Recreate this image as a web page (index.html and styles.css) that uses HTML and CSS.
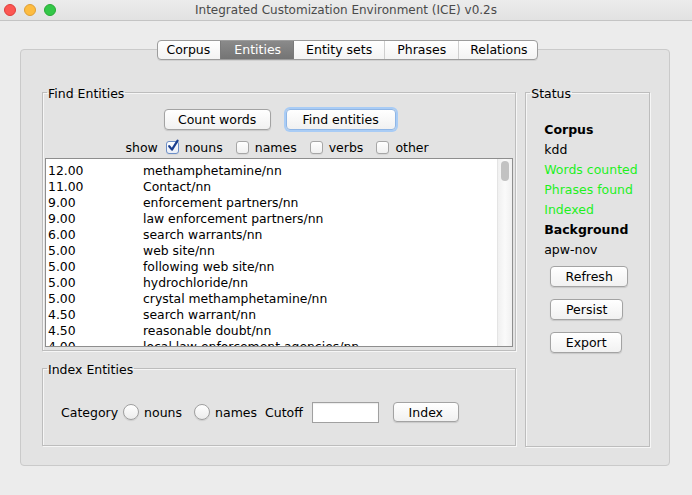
FILE: index.html
```html
<!DOCTYPE html>
<html>
<head>
<meta charset="utf-8">
<link rel="stylesheet" href="styles.css">
</head>
<body>
<div class="window">
  <div class="titlebar">
    <div class="lights">
      <span class="light red"></span>
      <span class="light yellow"></span>
      <span class="light green"></span>
    </div>
    <div class="title">Integrated Customization Environment (ICE) v0.2s</div>
    <div class="spacer"></div>
  </div>

  <div class="content">
    <div class="tabs">
      <span class="tab">Corpus</span>
      <span class="tab active">Entities</span>
      <span class="tab">Entity sets</span>
      <span class="tab">Phrases</span>
      <span class="tab">Relations</span>
    </div>

    <div class="panel">
      <div class="left">
        <fieldset class="group find">
          <legend>Find Entities</legend>
          <div class="gbody find-body">
            <div class="btnrow">
              <button class="btn btn-count">Count words</button>
              <button class="btn btn-find focus">Find entities</button>
            </div>
            <div class="showrow">
              <span class="lbl show">show</span>
              <span class="check checked"><svg viewBox="0 0 14 14" width="14" height="14"><path d="M3.2 7.2 L6 10.6 L11.6 1.6" fill="none" stroke="#1b3f8f" stroke-width="2.2" stroke-linecap="round" stroke-linejoin="round"/></svg></span>
              <span class="lbl">nouns</span>
              <span class="check"></span>
              <span class="lbl">names</span>
              <span class="check"></span>
              <span class="lbl">verbs</span>
              <span class="check"></span>
              <span class="lbl">other</span>
            </div>
            <div class="list">
              <div class="rows">
                <div class="row"><span class="num">12.00</span><span>methamphetamine/nn</span></div>
                <div class="row"><span class="num">11.00</span><span>Contact/nn</span></div>
                <div class="row"><span class="num">9.00</span><span>enforcement partners/nn</span></div>
                <div class="row"><span class="num">9.00</span><span>law enforcement partners/nn</span></div>
                <div class="row"><span class="num">6.00</span><span>search warrants/nn</span></div>
                <div class="row"><span class="num">5.00</span><span>web site/nn</span></div>
                <div class="row"><span class="num">5.00</span><span>following web site/nn</span></div>
                <div class="row"><span class="num">5.00</span><span>hydrochloride/nn</span></div>
                <div class="row"><span class="num">5.00</span><span>crystal methamphetamine/nn</span></div>
                <div class="row"><span class="num">4.50</span><span>search warrant/nn</span></div>
                <div class="row"><span class="num">4.50</span><span>reasonable doubt/nn</span></div>
                <div class="row"><span class="num">4.00</span><span>local law enforcement agencies/nn</span></div>
              </div>
              <div class="scrollbar"><div class="thumb"></div></div>
            </div>
          </div>
        </fieldset>

        <fieldset class="group index">
          <legend>Index Entities</legend>
          <div class="gbody index-body">
            <span class="lbl cat">Category</span>
            <span class="radio"></span>
            <span class="lbl r1">nouns</span>
            <span class="radio"></span>
            <span class="lbl r2">names</span>
            <span class="lbl cutoff">Cutoff</span>
            <span class="input"></span>
            <button class="btn btn-index">Index</button>
          </div>
        </fieldset>
      </div>

      <fieldset class="group status">
        <legend>Status</legend>
        <div class="gbody status-body">
          <div class="stat bold">Corpus</div>
          <div class="stat">kdd</div>
          <div class="stat ok">Words counted</div>
          <div class="stat ok">Phrases found</div>
          <div class="stat ok">Indexed</div>
          <div class="stat bold">Background</div>
          <div class="stat">apw-nov</div>
          <div class="sbtns">
            <button class="btn btn-refresh">Refresh</button>
            <button class="btn btn-persist">Persist</button>
            <button class="btn btn-export">Export</button>
          </div>
        </div>
      </fieldset>
    </div>
  </div>
</div>
</body>
</html>
```

FILE: styles.css
```css
* { box-sizing: border-box; }

html, body {
  margin: 0;
  padding: 0;
}

body {
  background: #ececec;
  font-family: "DejaVu Sans", sans-serif;
  font-size: 12.5px;
  color: #000;
  width: 692px;
  height: 495px;
  overflow: hidden;
}

.window {
  width: 692px;
  height: 495px;
  display: flex;
  flex-direction: column;
}

/* ---------- title bar ---------- */
.titlebar {
  height: 21px;
  display: flex;
  align-items: center;
  background: linear-gradient(#ececec, #e2e2e2);
  border-bottom: 1px solid #c4c4c4;
  flex: none;
}

.lights {
  display: flex;
  gap: 8px;
  padding-left: 4px;
  width: 60px;
}

.light {
  width: 12px;
  height: 12px;
  border-radius: 50%;
  display: block;
}
.light.red { background: #fc5753; border: 1px solid #df3d3a; }
.light.yellow { background: #fdbc40; border: 1px solid #de9f34; }
.light.green { background: #33c748; border: 1px solid #27aa35; }

.title {
  flex: 1;
  text-align: center;
  color: #4a4a4a;
  font-size: 12px;
  line-height: 20px;
}

.spacer { width: 60px; }

/* ---------- content ---------- */
.content {
  flex: 1;
  display: flex;
  flex-direction: column;
  padding: 19px 22px 28px 20px;
}

.tabs {
  align-self: center;
  margin-left: 5px;
  display: flex;
  height: 20px;
  border: 1px solid #9c9c9c;
  border-radius: 4px;
  background: linear-gradient(#ffffff, #f3f3f3);
  position: relative;
  z-index: 2;
  box-shadow: 0 1px 0 rgba(0,0,0,0.08);
  overflow: hidden;
}

.tab {
  line-height: 18px;
  padding: 0 12px;
  border-left: 1px solid #cfcfcf;
  color: #000;
}
.tab:first-child { border-left: none; padding: 0 10px 0 8px; }
.tab.active {
  background: linear-gradient(#8a8a8a, #747474);
  color: #fff;
  border-left-color: #7a7a7a;
  padding: 0 12px 0 13px;
}
.tab.active + .tab { border-left-color: #7a7a7a; }
.tab:last-child { padding: 0 9px 0 11px; }

.panel {
  height: 417px;
  flex: none;
  margin-top: -11px;
  border: 1px solid #cacaca;
  border-radius: 4px;
  background: #e3e3e3;
  display: flex;
  align-items: flex-start;
  gap: 9px;
  padding: 33px 19px 18px 21px;
}

.left {
  width: 475px;
  display: flex;
  flex-direction: column;
  gap: 8px;
}

/* ---------- group boxes ---------- */
.group {
  margin: 0;
  border: 1px solid #bdbdbd;
  box-shadow: 1px 1px 0 #f6f6f6, inset 1px 1px 0 #f6f6f6;
  padding: 0;
  min-width: 0;
}

.group legend {
  padding: 3px 1px 0 1px;
  margin-left: 4px;
  line-height: 16px;
  font-size: 12.5px;
}

.find { height: 268px; }

.find-body {
  display: flex;
  flex-direction: column;
  padding: 0 2px 2px 2px;
}

.btnrow {
  display: flex;
  justify-content: center;
  gap: 15px;
  margin-top: 7px;
  padding-left: 1px;
}

.btn {
  font-family: "DejaVu Sans", sans-serif;
  font-size: 12.5px;
  height: 21px;
  padding: 0;
  border: 1px solid #a3a3a3;
  border-radius: 4px;
  background: linear-gradient(#ffffff, #f1f1f1);
  box-shadow: 0 1px 1px rgba(0,0,0,0.12);
  color: #000;
}
.btn.focus {
  border-color: #8fb6e6;
  box-shadow: 0 0 0 2px #a9ccf5;
}
.btn-count { width: 107px; }
.btn-find { width: 110px; }

.showrow {
  display: flex;
  align-items: center;
  justify-content: center;
  margin-top: 8px;
  height: 18px;
  padding-right: 4px;
}
.showrow .lbl { margin-right: 13px; }
.showrow .lbl:last-child { margin-right: 0; }
.showrow .show { margin-right: 8px; }

.check {
  width: 13px;
  height: 13px;
  border: 1px solid #a6a6a6;
  border-radius: 3px;
  background: linear-gradient(#ffffff, #f0f0f0);
  margin-right: 6px;
  display: flex;
  align-items: center;
  justify-content: center;
  box-shadow: 0 1px 0 rgba(0,0,0,0.05);
}
.check.checked {
  border-color: #6d8fc7;
  background: linear-gradient(#ffffff, #e9eef7);
}
.check svg { display: block; margin-top: -3px; margin-left: 2px; flex: none; }

.list {
  margin-top: 2px;
  height: 189px;
  display: flex;
  background: #fff;
  border: 1px solid #8e8e8e;
  overflow: hidden;
}

.rows {
  flex: 1;
  padding-top: 4px;
  padding-left: 2px;
  overflow: hidden;
  font-size: 12.4px;
}

.row {
  display: flex;
  height: 16px;
  line-height: 16px;
  white-space: nowrap;
}
.num { width: 95px; }

.scrollbar {
  width: 15px;
  background: linear-gradient(90deg, #f0f0f0, #fafafa 50%, #f0f0f0);
  border-left: 1px solid #e4e4e4;
  padding: 2px 0 0 3px;
}
.thumb {
  width: 8px;
  height: 20px;
  border-radius: 4px;
  background: #c2c2c2;
}

/* ---------- index group ---------- */
.index { height: 87px; }

.index-body {
  display: flex;
  align-items: center;
  margin-top: 23px;
  height: 22px;
  padding-left: 18px;
}

.radio {
  width: 16px;
  height: 16px;
  border-radius: 50%;
  border: 1px solid #9f9f9f;
  background: linear-gradient(#ffffff, #ececec);
  box-shadow: 0 1px 1px rgba(0,0,0,0.1);
}
.cat { margin-right: 5px; }
.r1 { margin-left: 5px; margin-right: 12px; }
.r2 { margin-left: 5px; margin-right: 8px; }
.cutoff { margin-right: 9px; }
.input {
  width: 67px;
  height: 21px;
  border: 1px solid #a0a0a0;
  background: #fff;
  box-shadow: inset 0 1px 1px rgba(0,0,0,0.08);
  margin-right: 14px;
}
.btn-index { width: 66px; height: 20px; }

/* ---------- status ---------- */
.status { width: 125px; height: 364px; }

.status-body {
  padding: 18px 0 0 18px;
}

.stat {
  line-height: 20px;
  height: 20px;
  white-space: nowrap;
}
.stat.bold { font-weight: bold; }
.stat.ok { color: #1ef01e; }

.sbtns {
  display: flex;
  flex-direction: column;
  align-items: flex-start;
  gap: 12px;
  margin-top: 6px;
  padding-left: 6px;
}
.sbtns .btn { height: 21px; }
.btn-refresh { width: 78px; }
.btn-persist { width: 73px; }
.btn-export { width: 72px; }
```
